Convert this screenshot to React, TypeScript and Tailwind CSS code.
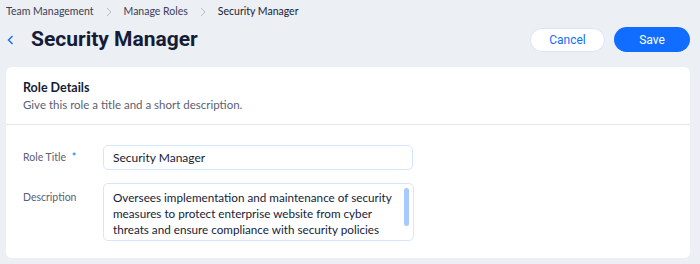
import React from "react";

const lato = { fontFamily: "Lato, Roboto, sans-serif" };

export default function App() {
  return (
    <div
      className="w-[700px] h-[264px] bg-[#eceff4] overflow-hidden"
      style={{ fontFamily: "Roboto, 'Noto Sans', sans-serif" }}
    >
      <div className="flex items-center h-[24px] pl-[6px] text-[10.5px] text-[#3b4057]" style={lato}>
        <span>Team Management</span>
        <svg width="16" height="16" viewBox="0 0 16 16" className="mx-[7px]">
          <path d="M6 4l4 4-4 4" fill="none" stroke="#b6bccb" strokeWidth="1" />
        </svg>
        <span>Manage Roles</span>
        <svg width="16" height="16" viewBox="0 0 16 16" className="mx-[7px]">
          <path d="M6 4l4 4-4 4" fill="none" stroke="#b6bccb" strokeWidth="1" />
        </svg>
        <span className="text-[#151c37]">Security Manager</span>
      </div>
      <div className="flex items-center h-[31px] pr-[10px]">
        <div className="w-[31px] flex items-center pl-[6px]">
          <svg width="10" height="14" viewBox="0 0 10 14">
            <path d="M6.5 3L2.5 7l4 4" fill="none" stroke="#116dff" strokeWidth="1.4" />
          </svg>
        </div>
        <h1 className="text-[21px] font-bold text-[#151c37]">Security Manager</h1>
        <div className="ml-auto flex items-center gap-[9px]">
          <button className="w-[75px] h-[24px] rounded-full bg-white border border-[#d6e6fe] text-[#116dff] text-[12px]">
            Cancel
          </button>
          <button className="w-[76px] h-[25px] rounded-full bg-[#116dff] text-white text-[12px]">
            Save
          </button>
        </div>
      </div>
      <div className="mx-[6px] mt-[12px] w-[684px] h-[191px] bg-white rounded-[6px]" style={lato}>
        <div className="px-[17px] pt-[12px] h-[58px] border-b border-[#e5e7ee]">
          <div className="text-[12.5px] font-bold text-[#151c37] leading-[18px]">Role Details</div>
          <div className="text-[11.5px] text-[#5b6073] leading-[18px] mt-[-1px]">
            Give this role a title and a short description.
          </div>
        </div>
        <div className="pl-[17px] pt-[20px]">
          <div className="flex items-center">
            <div className="w-[80px] text-[10.5px] text-[#5b6073]">
              Role Title <span className="text-[#116dff] ml-[3px]">*</span>
            </div>
            <div className="w-[310px] h-[25px] border border-[#d6e6fe] rounded-[5px] flex items-center px-[9px] text-[12px] text-[#151c37]">
              Security Manager
            </div>
          </div>
          <div className="flex mt-[13px]">
            <div className="w-[80px] text-[10.5px] text-[#5b6073] pt-[7px]">Description</div>
            <div className="relative w-[311px] h-[58px] border border-[#d6e6fe] rounded-[5px] overflow-hidden pl-[9px] pr-[15px] pt-[5px] text-[11.7px] leading-[16px] text-[#151c37]">
              Oversees implementation and maintenance of security measures to protect enterprise website from cyber threats and ensure compliance with security policies and standards.
              <div className="absolute right-[4px] top-[4px] w-[5px] h-[38px] rounded-full bg-[#a8c8ff]" />
            </div>
          </div>
        </div>
      </div>
    </div>
  );
}
